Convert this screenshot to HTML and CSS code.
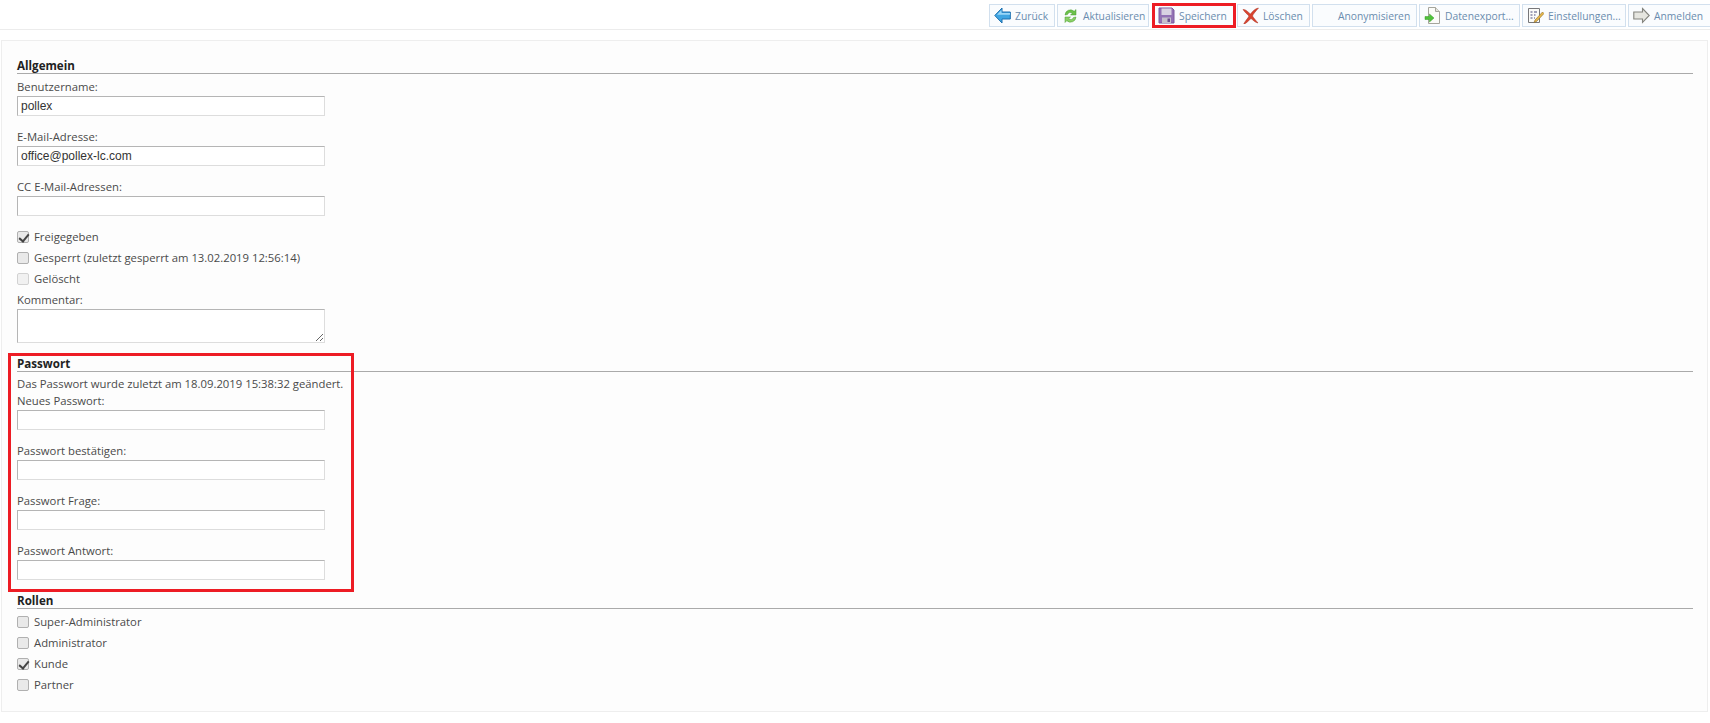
FILE: index.html
```html
<!DOCTYPE html>
<html lang="de">
<head>
<meta charset="utf-8">
<title>Benutzer</title>
<link rel="stylesheet" href="styles.css">
</head>
<body>
<header class="toolbar">
  <a class="btn w-back"><svg class="ico" viewBox="0 0 17 17"><path d="M8 1 .8 8.500 8 16v-4h8.300V5H8z" fill="#3fa5e2" stroke="#1c6fae"/><path d="M7.500 3 3 7.800h13V6H7.500z" fill="#9ad6f7"/></svg><span>Zurück</span></a>
  <a class="btn w-ref"><svg class="ico" viewBox="0 0 17 17"><path d="M3 8a5.500 5.500 0 0 1 9.200-3.700L14 2.500V8H8.500l1.800-1.800a3 3 0 0 0-4.800 1.300z" fill="#6cc24a" stroke="#4a9a32" stroke-width=".5"/><path d="M14 10a5.500 5.500 0 0 1-9.200 3.700L3 15.500V10h5.500l-1.800 1.800a3 3 0 0 0 4.800-1.300z" fill="#8ad066" stroke="#4a9a32" stroke-width=".5"/></svg><span>Aktualisieren</span></a>
  <a class="btn w-save"><svg class="ico" viewBox="0 0 17 17"><path d="M1 1h13l2 2v13H1z" fill="#9372b5" stroke="#7a5a9c"/><rect x="3.500" y="1.500" width="10" height="6.500" fill="#d9d2e2"/><rect x="4" y="10.500" width="9" height="5.500" fill="#c6c0cc"/><rect x="9.500" y="11.500" width="2.500" height="3.500" fill="#6d4f8e"/></svg><span>Speichern</span></a>
  <a class="btn w-del"><svg class="ico" viewBox="0 0 17 17"><path d="M1 2.500c2.500-.5 5.500 3 7.500 4.500 2-2.500 4.500-5.500 8-6-2.500 3-5.500 6-6 8 1 2 3.500 4.500 5.500 7-3-.5-5.500-3.500-7-4.500-2 1.500-4 4.500-7.500 6 1-3 4.500-6 5.500-8.500-2-2-4.500-4-6-6.500z" fill="#d9432f" stroke="#a83020" stroke-width=".5"/></svg><span>Löschen</span></a>
  <a class="btn w-anon"><span class="ico"></span><span>Anonymisieren</span></a>
  <a class="btn w-exp"><svg class="ico" viewBox="0 0 17 17"><path d="M4.500.5h7l4 4v12h-11z" fill="#fbfbf8" stroke="#a5a59c"/><path d="M11.500.5v4h4" fill="#e4e4dc" stroke="#a5a59c"/><path d="M1 9.500h4.500V7l4.500 4-4.500 4v-2.500H1z" fill="#4fc23a" stroke="#3a9a2a" stroke-width=".5"/></svg><span>Datenexport...</span></a>
  <a class="btn w-set"><svg class="ico" viewBox="0 0 17 17"><path d="M1.500 1.500h11v14h-11z" fill="#fbfbf8" stroke="#77777a"/><path d="M3.500 5h2M7 5h3M3.500 8h2M7 8h1.500M3.500 11h2M7 11h1" stroke="#4a4a7a" stroke-width="1.100"/><path d="m8 13 7.500-8 1.500 1.500-7.500 8-2.500 1z" fill="#e8b84a" stroke="#8a6a2a" stroke-width=".6"/></svg><span>Einstellungen...</span></a>
  <a class="btn w-log"><svg class="ico" viewBox="0 0 17 17"><path d="M9.500 1.500 16.300 8.500 9.500 15.500V12H.8V5h8.700z" fill="#e6e6e0" stroke="#84847e" stroke-width="1.100"/></svg><span>Anmelden</span></a>
</header>

<main class="panel">
  <section class="sec">
    <h2 class="sec-title">Allgemein</h2>
    <div class="field"><label class="lbl">Benutzername:</label><input class="inp" type="text" value="pollex"></div>
    <div class="field"><label class="lbl">E-Mail-Adresse:</label><input class="inp" type="text" value="office@pollex-lc.com"></div>
    <div class="field"><label class="lbl">CC E-Mail-Adressen:</label><input class="inp" type="text"></div>
    <div class="checks">
      <label class="chk"><input class="box" type="checkbox" checked>Freigegeben</label>
      <label class="chk"><input class="box" type="checkbox">Gesperrt (zuletzt gesperrt am 13.02.2019 12:56:14)</label>
      <label class="chk"><input class="box dis" type="checkbox">Gelöscht</label>
    </div>
    <div class="field field-area"><label class="lbl">Kommentar:</label><textarea class="inp area"></textarea></div>
  </section>
  <section class="sec">
    <h2 class="sec-title">Passwort</h2>
    <p class="note">Das Passwort wurde zuletzt am 18.09.2019 15:38:32 geändert.</p>
    <div class="field"><label class="lbl">Neues Passwort:</label><input class="inp" type="text"></div>
    <div class="field"><label class="lbl">Passwort bestätigen:</label><input class="inp" type="text"></div>
    <div class="field"><label class="lbl">Passwort Frage:</label><input class="inp" type="text"></div>
    <div class="field"><label class="lbl">Passwort Antwort:</label><input class="inp" type="text"></div>
  </section>
  <section class="sec">
    <h2 class="sec-title">Rollen</h2>
    <div class="checks">
      <label class="chk"><input class="box" type="checkbox">Super-Administrator</label>
      <label class="chk"><input class="box" type="checkbox">Administrator</label>
      <label class="chk"><input class="box" type="checkbox" checked>Kunde</label>
      <label class="chk"><input class="box" type="checkbox">Partner</label>
    </div>
  </section>
</main>

<div class="mark mark-save"></div>
<div class="mark mark-pass"></div>
</body>
</html>
```
FILE: styles.css
```css
* { box-sizing: border-box; }
html, body { height: 100%; }
body {
  margin: 0;
  background: #fff;
  color: #4a4a4a;
  font: 11.3px/16px "Open Sans", "Liberation Sans", sans-serif;
  overflow: hidden;
  position: relative;
}
.toolbar {
  height: 30px;
  padding: 4px 0 2px;
  border-bottom: 1px solid #ececec;
  display: flex;
  justify-content: flex-end;
  gap: 2px;
}
.btn {
  height: 23px;
  flex: none;
  padding: 0 0 0 4px;
  display: flex;
  align-items: center;
  gap: 4px;
  border: 1px solid #d2e0ee;
  background: #fafcfe;
  color: #6a8cae;
  font-size: 10.3px;
  white-space: nowrap;
  overflow: hidden;
}
.w-back { width: 66px; }
.w-ref { width: 92px; }
.w-save { width: 82px; margin-left: 2px; }
.w-del { width: 73px; }
.w-anon { width: 105px; }
.w-exp { width: 101px; }
.w-set { width: 104px; }
.w-log { width: 84px; margin-right: -2px; }
.ico { width: 17px; height: 17px; display: block; flex: none; }
.panel {
  margin: 10px 2px 0 1px;
  height: 672px;
  padding: 17px 14px 0 15px;
  border: 1px solid #eee;
  background: #fdfdfd;
}
.sec { margin-bottom: 5px; }
.sec-title {
  margin: 0;
  height: 16px;
  font-size: 11.6px;
  font-weight: 700;
  line-height: 15px;
  color: #222;
  border-bottom: 1px solid #aaa;
}
.field { padding-bottom: 8px; }
.field-area { margin-top: -2px; }
.lbl { display: block; height: 22px; padding-top: 5px; line-height: 16px; }
.inp {
  display: block;
  width: 308px;
  height: 20px;
  margin: 0;
  padding: 1px 3px;
  border: 1px solid;
  border-color: #b5b5b5 #ddd #ddd #b5b5b5;
  background: #fff;
  color: #333;
  font: 12px "Liberation Sans", sans-serif;
}
.checks { display: flex; flex-direction: column; margin-top: 2px; }
.chk { height: 21px; display: flex; align-items: center; gap: 5px; }
.box {
  appearance: none;
  width: 12px;
  height: 12px;
  margin: 0;
  flex: none;
  border: 1px solid #b0b0b0;
  border-radius: 2px;
  background: #e9e9e9;
  position: relative;
}
.box:checked::after {
  content: "";
  position: absolute;
  left: 3px;
  top: 0;
  width: 4px;
  height: 8px;
  border: solid #444;
  border-width: 0 2px 2px 0;
  transform: rotate(40deg);
}
.dis { opacity: .55; }
.area { height: 34px; resize: both; }
.note { margin: 0; height: 16px; padding-top: 4px; line-height: 16px; }
.mark { position: absolute; border: 3px solid #ed1c24; pointer-events: none; }
.mark-save { left: 1152px; top: 3px; width: 84px; height: 25px; }
.mark-pass { left: 8px; top: 353px; width: 346px; height: 239px; }
```
